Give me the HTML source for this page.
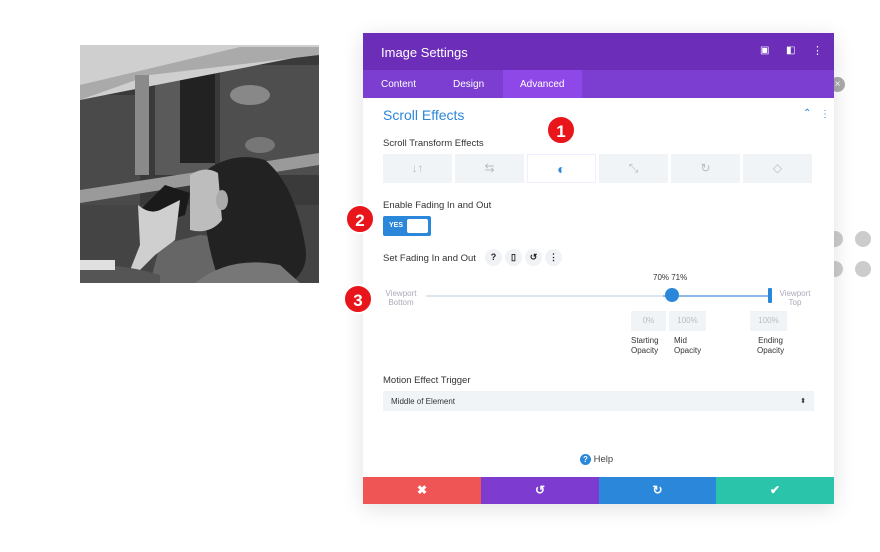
<!DOCTYPE html>
<html><head><style>
*{margin:0;padding:0;box-sizing:border-box}
body{width:880px;height:552px;background:#fff;position:relative;overflow:hidden;font-family:"Liberation Sans",sans-serif}
.a{position:absolute}
.dot{width:16px;height:16px;border-radius:50%;background:#ccc}
.panel{left:363px;top:33px;width:471px;height:471px;background:#fff;box-shadow:0 4px 20px rgba(0,0,0,.12)}
.hdr{left:0;top:0;width:471px;height:37px;background:#6c2eb9;color:#fff;font-size:13px;padding:12px 18px}
.tabs{left:0;top:37px;width:471px;height:28px;background:#7b3ed0;color:#fff;font-size:10px}
.tabs span{position:absolute;top:9px}
.lbl{font-size:9.5px;color:#333}
.badge{width:30px;height:30px;border-radius:50%;background:#e8151b;color:#fff;font-size:17px;font-weight:bold;text-align:center;line-height:30px;border:2px solid #fff}
.ic{top:121px;height:29px;width:69px;background:#f1f4f7;color:#bbb;font-size:12px;text-align:center;line-height:29px}
.sm{font-size:8px;color:#aab;text-align:center;line-height:9px}
.box{height:20px;background:#f1f4f7;font-size:8px;color:#bbb;text-align:center;line-height:20px}
.foot{top:444px;height:27px;color:#fff;font-size:12px;font-weight:bold;text-align:center;line-height:27px}
.ci{width:17px;height:17px;border-radius:50%;background:#f0f2f5;font-size:9px;text-align:center;line-height:17px;color:#222;font-weight:bold}
</style></head><body>
<svg class="a" style="left:80px;top:45px" width="239" height="238" viewBox="0 0 239 238">
 <rect width="239" height="238" fill="#3a3a3a"/>
 <rect x="0" y="50" width="60" height="180" fill="#4a4a4a"/>
 <rect x="75" y="30" width="60" height="100" fill="#5a5a5a"/>
 <rect x="100" y="28" width="35" height="90" fill="#222"/>
 <rect x="140" y="20" width="99" height="110" fill="#4e4e4e"/>
 <ellipse cx="170" cy="50" rx="20" ry="10" fill="#888"/>
 <ellipse cx="180" cy="100" rx="15" ry="8" fill="#777"/>
 <polygon points="0,0 239,0 239,8 0,55" fill="#cfcfcf"/>
 <polygon points="0,40 160,2 239,2 239,10 70,30 0,55" fill="#aaa"/>
 <rect x="55" y="30" width="14" height="100" fill="#8a8a8a"/>
 <polygon points="0,145 239,108 239,120 0,158" fill="#9a9a9a"/>
 <rect x="0" y="160" width="239" height="78" fill="#444"/>
 <path d="M70 238 L80 200 L120 190 L170 195 L180 238 Z" fill="#666"/>
 <path d="M120 130 Q150 105 185 115 Q215 140 225 200 Q230 225 210 238 L140 238 Q125 200 120 130Z" fill="#222"/>
 <path d="M110 130 Q125 120 138 128 L142 175 Q130 190 110 185 Z" fill="#bdbdbd"/>
 <ellipse cx="142" cy="155" rx="6" ry="10" fill="#aaa"/>
 <path d="M60 165 L85 140 L110 148 L105 170 L80 178 Z" fill="#1a1a1a"/>
 <path d="M58 160 Q70 170 80 165 L100 155 L95 195 L75 210 L55 230 L45 238 L60 200 Z" fill="#cfcfcf"/>
 <path d="M0 238 L0 225 Q30 215 80 230 L80 238Z" fill="#555"/>
 <path d="M115 238 Q150 210 200 220 L220 238Z" fill="#777"/>
 <rect x="0" y="215" width="35" height="10" fill="#e0e0e0"/>
</svg>
<div class="a dot" style="left:827px;top:231px"></div>
<div class="a dot" style="left:855px;top:231px"></div>
<div class="a dot" style="left:827px;top:261px"></div>
<div class="a dot" style="left:855px;top:261px"></div>
<div class="a" style="left:830px;top:77px;width:15px;height:15px;border-radius:50%;background:#aaa;color:#fff;font-size:10px;text-align:center;line-height:15px">×</div>
<div class="a panel">
 <div class="a hdr">Image Settings
  <span class="a" style="left:397px;top:12px;font-size:10px">▣</span>
  <span class="a" style="left:423px;top:12px;font-size:10px">◧</span>
  <span class="a" style="left:449px;top:11px;font-size:11px">⋮</span></div>
 <div class="a tabs">
  <span style="left:18px">Content</span><span style="left:90px">Design</span>
  <div class="a" style="left:140px;top:0;width:79px;height:28px;background:#8f48e8"></div>
  <span style="left:157px">Advanced</span></div>
 <div class="a" style="left:20px;top:74px;font-size:14px;color:#2b87da">Scroll Effects</div>
 <div class="a" style="left:440px;top:75px;color:#2b87da;font-size:10px">⌃</div>
 <div class="a" style="left:457px;top:76px;color:#2b87da;font-size:10px">⋮</div>
 <div class="a lbl" style="left:20px;top:105px">Scroll Transform Effects</div>
 <div class="a ic" style="left:20px">↓↑</div>
 <div class="a ic" style="left:92px">⇆</div>
 <div class="a ic" style="left:164px;background:#fff;border:1px solid #eef;color:#2b87da;font-size:14px">◐</div>
 <div class="a ic" style="left:236px">⤡</div>
 <div class="a ic" style="left:308px">↻</div>
 <div class="a ic" style="left:380px">◇</div>
 <div class="a lbl" style="left:20px;top:167px">Enable Fading In and Out</div>
 <div class="a" style="left:20px;top:183px;width:48px;height:20px;background:#2b87da;border-radius:2px">
  <span class="a" style="left:6px;top:6px;color:#fff;font-size:7px;font-weight:bold">YES</span>
  <div class="a" style="left:24px;top:3px;width:21px;height:14px;background:#fff;border-radius:2px"></div></div>
 <div class="a lbl" style="left:20px;top:220px">Set Fading In and Out</div>
 <div class="a ci" style="left:122px;top:216px">?</div>
 <div class="a ci" style="left:142px;top:216px">▯</div>
 <div class="a ci" style="left:162px;top:216px">↺</div>
 <div class="a ci" style="left:182px;top:216px">⋮</div>
 <div class="a" style="left:290px;top:240px;font-size:8px;color:#333">70% 71%</div>
 <div class="a sm" style="left:16px;top:256px;width:44px">Viewport<br>Bottom</div>
 <div class="a sm" style="left:410px;top:256px;width:44px">Viewport<br>Top</div>
 <div class="a" style="left:63px;top:262px;width:345px;height:2px;background:#dde6f0"></div>
 <div class="a" style="left:300px;top:262px;width:108px;height:2px;background:#8fbbe8"></div>
 <div class="a" style="left:302px;top:255px;width:14px;height:14px;border-radius:50%;background:#2b87da"></div>
 <div class="a" style="left:405px;top:255px;width:4px;height:15px;background:#2b87da;border-radius:1px"></div>
 <div class="a box" style="left:268px;top:278px;width:35px">0%</div>
 <div class="a box" style="left:306px;top:278px;width:37px">100%</div>
 <div class="a box" style="left:387px;top:278px;width:37px">100%</div>
 <div class="a" style="left:268px;top:303px;font-size:8px;color:#333;line-height:10px">Starting<br>Opacity</div>
 <div class="a" style="left:311px;top:303px;font-size:8px;color:#333;line-height:10px">Mid<br>Opacity</div>
 <div class="a" style="left:394px;top:303px;font-size:8px;color:#333;line-height:10px;text-align:center">Ending<br>Opacity</div>
 <div class="a lbl" style="left:20px;top:342px">Motion Effect Trigger</div>
 <div class="a" style="left:20px;top:358px;width:431px;height:20px;background:#f1f4f7;font-size:8px;color:#333;padding:6px 8px">Middle of Element<span style="float:right;font-size:7px">⬍</span></div>
 <div class="a" style="left:217px;top:421px;font-size:9.5px;color:#444"><span style="display:inline-block;width:11px;height:11px;border-radius:50%;background:#2b87da;color:#fff;font-size:8px;text-align:center;line-height:11px;font-weight:bold">?</span> Help</div>
 <div class="a foot" style="left:0;width:118px;background:#ef5555">✖</div>
 <div class="a foot" style="left:118px;width:118px;background:#7e3bd0">↺</div>
 <div class="a foot" style="left:236px;width:117px;background:#2b87da">↻</div>
 <div class="a foot" style="left:353px;width:118px;background:#29c4a9">✔</div>
</div>
<div class="a badge" style="left:546px;top:115px">1</div>
<div class="a badge" style="left:345px;top:204px">2</div>
<div class="a badge" style="left:343px;top:284px">3</div>
</body></html>
